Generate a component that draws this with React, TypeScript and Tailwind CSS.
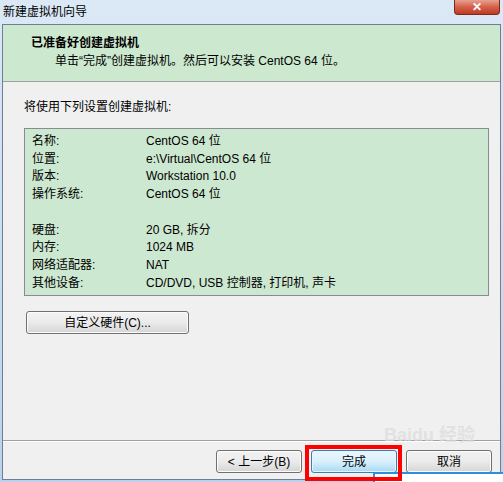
import React from 'react';

const font = {
  fontFamily: '"Liberation Sans", "Noto Sans CJK SC", sans-serif',
};

const rows: [string, string][] = [
  ['名称:', 'CentOS 64 位'],
  ['位置:', 'e:\\Virtual\\CentOS 64 位'],
  ['版本:', 'Workstation 10.0'],
  ['操作系统:', 'CentOS 64 位'],
  ['', ''],
  ['硬盘:', '20 GB, 拆分'],
  ['内存:', '1024 MB'],
  ['网络适配器:', 'NAT'],
  ['其他设备:', 'CD/DVD, USB 控制器, 打印机, 声卡'],
];

function WinButton({ label, primary, className = '' }: { label: string; primary?: boolean; className?: string }) {
  const skin = primary
    ? 'border-[#3c7fb1] bg-gradient-to-b from-[#eaf6fd] via-[#d9f0fc] to-[#a7d9f5] shadow-[inset_0_0_0_1px_#e6f4fb]'
    : 'border-[#707070] bg-gradient-to-b from-[#f2f2f2] via-[#ebebeb] to-[#d5d5d5] shadow-[inset_0_0_0_1px_#fcfcfc]';
  return (
    <div
      className={`flex h-[23px] items-center justify-center rounded-[3px] border text-[12px] text-black ${skin} ${className}`}
    >
      {label}
    </div>
  );
}

export default function App() {
  return (
    <div
      className="relative h-[482px] w-[503px] overflow-hidden bg-gradient-to-b from-[#dbe8f6] to-[#b9d3ee]"
      style={font}
    >
      {/* title bar */}
      <div className="flex h-[24px] items-center pl-[3px] text-[12px] text-black">新建虚拟机向导</div>
      <div className="absolute right-[3px] top-0 flex h-[15px] w-[46px] items-center justify-center rounded-b-[4px] border border-t-0 border-[#7b2a1e] bg-gradient-to-b from-[#e7a08f] via-[#d3604a] to-[#c03a22] text-[12px] font-bold leading-none text-white">
        ✕
      </div>

      {/* client area */}
      <div className="ml-[2px] flex h-[456px] w-[499px] flex-col border border-[#6f7f92] bg-[#f0f0f0]">
        <div className="h-[57px] border-b border-[#a0a0a0] bg-[#cce8cf] text-[12px] text-black">
          <div className="pl-[28px] pt-[10px] font-bold leading-[16px]">已准备好创建虚拟机</div>
          <div className="pl-[52px] pt-[2px] leading-[16px]">单击“完成”创建虚拟机。然后可以安装 CentOS 64 位。</div>
        </div>

        <div className="flex flex-1 flex-col">
          <div className="pl-[21px] pt-[17px] text-[12px] leading-[16px] text-black">将使用下列设置创建虚拟机:</div>
          <div className="ml-[21px] mt-[13px] h-[168px] w-[465px] border border-[#888c92] bg-[#cde8d0] pt-[3px]">
            {rows.map(([k, v], i) => (
              <div key={i} className="flex h-[17.75px] items-center text-[12px] text-black">
                <div className="w-[121px] pl-[7px]">{k}</div>
                <div>{v}</div>
              </div>
            ))}
          </div>
          <WinButton label="自定义硬件(C)..." className="ml-[23px] mt-[15px] w-[163px]" />
          <div className="flex-1" />
          <div className="h-[2px] border-t border-b border-t-[#a0a0a0] border-b-white" />
          <div className="flex gap-[9px] pb-[6px] pl-[213px] pt-[8px]">
            <WinButton label="< 上一步(B)" className="w-[86px]" />
            <WinButton label="完成" primary className="w-[86px]" />
            <WinButton label="取消" className="w-[86px]" />
          </div>
        </div>
      </div>

      {/* watermark */}
      <div className="pointer-events-none absolute left-[384px] top-[426px] text-[18px] font-bold leading-none text-[#dcdcdc] opacity-70">
        Baidu 经验
      </div>

      {/* overlapping window edge */}
      <div className="absolute left-[373px] top-[472px] h-[10px] w-[130px] border-l-2 border-t-2 border-[#2f8fdf] bg-white" />

      {/* annotation */}
      <div className="absolute left-[305px] top-[445px] h-[36px] w-[97px] border-4 border-[#ff0000]" />
    </div>
  );
}
